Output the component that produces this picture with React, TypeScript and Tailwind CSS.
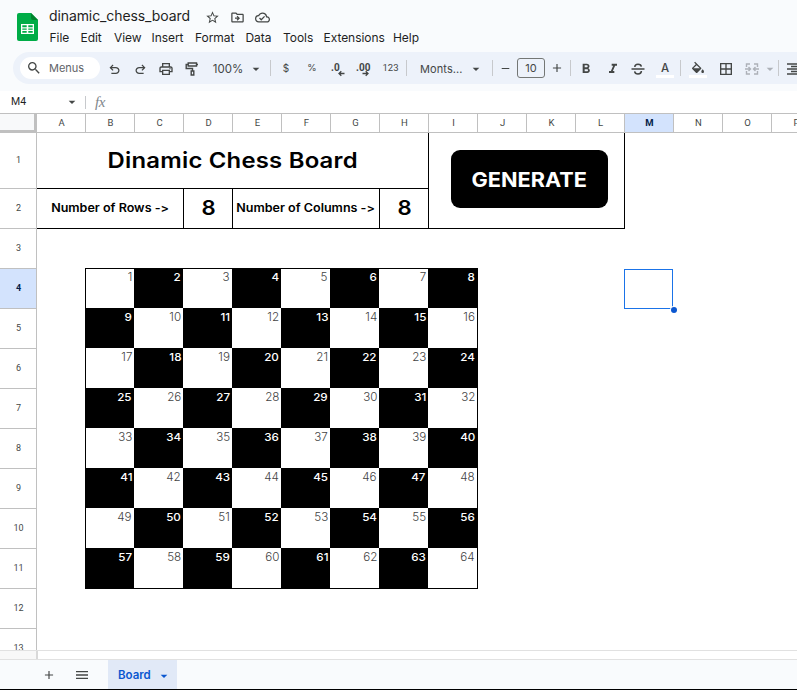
import React from "react";
import {
  MdStarBorder, MdOutlineDriveFileMove, MdOutlineCloudDone, MdSearch, MdOutlinePrint,
  MdArrowDropDown, MdFormatBold, MdFormatItalic, MdFormatColorFill,
  MdBorderAll, MdAdd, MdRemove, MdMenu,
} from "react-icons/md";

const columns = "ABCDEFGHIJKLMNOP".split("");
const rows = Array.from({ length: 13 }, (_, i) => i + 1);
const squares = Array.from({ length: 64 }, (_, i) => i + 1);

const menus: [string, string][] = [
  ["File", "w-[31px]"], ["Edit", "w-[33.5px]"], ["View", "w-[37.5px]"], ["Insert", "w-[43.5px]"],
  ["Format", "w-[50.5px]"], ["Data", "w-[37.5px]"], ["Tools", "w-[40.5px]"],
  ["Extensions", "w-[69.5px]"], ["Help", "w-[40px]"],
];

function Slot({ className, children }: { className: string; children?: React.ReactNode }) {
  return <div className={"flex h-full shrink-0 items-center justify-center " + className}>{children}</div>;
}

function Divider() {
  return <div className="h-4 w-px shrink-0 bg-[#c7c9cc]" />;
}

function UndoIcon({ className = "" }: { className?: string }) {
  return (
    <svg viewBox="0 -960 960 960" className={"size-[15px] fill-[#444746] " + className}>
      <path d="M280-200v-80h284q63 0 109.500-40T720-420q0-60-46.500-100T564-560H312l104 104-56 56-200-200 200-200 56 56-104 104h252q97 0 166.500 63T800-420q0 94-69.500 157T564-200H280Z" />
    </svg>
  );
}

function Decimal({ label, right }: { label: string; right?: boolean }) {
  return (
    <svg viewBox="0 0 18 18" className="size-[18px] overflow-visible text-[#444746]">
      <text x={right ? 1 : 2} y="11.500" className="fill-current font-['Roboto',sans-serif] text-[10px] font-bold">{label}</text>
      <path d={right ? "M7.500 14.500H13M10.700 12.300 13 14.500 10.700 16.700" : "M15.500 14.500H10M12.300 12.300 10 14.500 12.300 16.700"} fill="none" stroke="currentColor" strokeWidth="1.300" />
    </svg>
  );
}

function Header() {
  return (
    <header className="flex h-[52px] shrink-0">
      <svg viewBox="0 0 21 28" className="mt-[13px] ml-[17px] h-7 w-[21px] shrink-0">
        <path d="M2 0h12L21 7V26a2 2 0 0 1-2 2H2a2 2 0 0 1-2-2V2a2 2 0 0 1 2-2Z" fill="#00ac47" />
        <path d="M14 0 21 7h-5a2 2 0 0 1-2-2Z" fill="#00832d" />
        <path d="M4 11h13v10H4Z" fill="#fff" />
        <path d="M5.300 12.300h4.400v1.900H5.300Zm6 0h4.400v1.900h-4.400ZM5.300 15.400h4.400v1.400H5.300Zm6 0h4.400v1.400h-4.400ZM5.300 18h4.400v1.700H5.300Zm6 0h4.400v1.700h-4.400Z" fill="#00ac47" />
      </svg>
      <div className="ml-[11px]">
        <div className="flex h-[33px] items-center text-[#444746]">
          <h1 className="w-[155px] pb-0.5 text-[14px] leading-[20px] tracking-[-0.100px] text-[#1f1f1f]">dinamic_chess_board</h1>
          <Slot className="w-[17px] pt-0.5"><MdStarBorder className="size-[15px]" /></Slot>
          <Slot className="ml-2 w-[17px] pt-0.5"><MdOutlineDriveFileMove className="size-[15px]" /></Slot>
          <Slot className="ml-2 w-[17px] pt-0.5"><MdOutlineCloudDone className="size-[15px]" /></Slot>
        </div>
        <nav className="ml-[0.5px] flex text-[12px] leading-[9px] tracking-[-0.050px] text-[#1f1f1f]">
          {menus.map(([m, w]) => <span key={m} className={w}>{m}</span>)}
        </nav>
      </div>
    </header>
  );
}

function Toolbar() {
  return (
    <div className="ml-[13px] flex h-8 shrink-0 items-center overflow-hidden rounded-l-2xl bg-[#edf2fa] text-[#444746]">
      <div className="ml-[7px] flex h-[22px] w-20 shrink-0 items-center rounded-full bg-white">
        <MdSearch className="ml-[6px] size-4" />
        <span className="ml-[7px] text-[11px] leading-[20px] text-[#5f6368]">Menus</span>
      </div>
      <Slot className="w-[27px] pt-0.5 pl-px"><UndoIcon /></Slot>
      <Slot className="w-[25px] pt-0.5 pl-px"><UndoIcon className="-scale-x-100" /></Slot>
      <Slot className="w-[27px] pt-px"><MdOutlinePrint className="size-4" /></Slot>
      <Slot className="w-[24px] pt-px pl-px">
        <svg viewBox="0 0 16 16" className="size-4" fill="none" stroke="#444746" strokeWidth="1.400">
          <path d="M4.200 2h8.300v3H4.200ZM4.200 3.500H2.200v4H8.500V10M12.300 3.500H14" />
          <path d="M7.200 10h2.600v4H7.200Z" />
        </svg>
      </Slot>
      <Slot className="ml-[10px] w-[30px] pt-[3px] text-[11.500px]">100%</Slot>
      <Slot className="ml-[5px] w-4 pt-0.5"><MdArrowDropDown className="size-4" /></Slot>
      <Slot className="w-[7px] justify-end"><Divider /></Slot>
      <Slot className="w-[30px] pt-px text-[10px]">$</Slot>
      <Slot className="w-[22px] pt-px text-[9.500px]">%</Slot>
      <Slot className="w-[29px]"><Decimal label=".0" /></Slot>
      <Slot className="w-[23px]"><Decimal label=".00" right /></Slot>
      <Slot className="w-[31px] pt-px font-['Roboto',sans-serif] text-[9.500px]">123</Slot>
      <Divider />
      <Slot className="ml-[13px] w-[42px] pt-[3px] text-[11px] tracking-[0.100px] !justify-start">Monts...</Slot>
      <Slot className="ml-[6px] w-4 pt-0.5"><MdArrowDropDown className="size-4" /></Slot>
      <Slot className="w-[9px] justify-end"><Divider /></Slot>
      <Slot className="w-[24px]"><MdRemove className="size-[13px]" /></Slot>
      <div className="flex h-5 w-7 shrink-0 items-center justify-center rounded-[3px] border border-[#747775] pt-px text-[11px]">10</div>
      <Slot className="w-[25px] pr-px"><MdAdd className="size-[14px]" /></Slot>
      <Divider />
      <Slot className="w-[30px] pt-px"><MdFormatBold className="size-4" /></Slot>
      <Slot className="w-[24px] pt-0.5 pr-px"><MdFormatItalic className="size-4" /></Slot>
      <Slot className="w-[28px] pt-px pr-[2px]">
        <svg viewBox="0 0 14 14" className="size-[14px]" fill="none" stroke="#444746" strokeWidth="1.500">
          <path d="M.5 7h13M3.800 5C3.800 3 5.300 2.200 7 2.200S10.200 3 10.300 4.600M3.600 9.300C3.900 11 5.200 11.900 7 11.900s3.400-.9 3.400-2.900" />
        </svg>
      </Slot>
      <Slot className="w-[24px] flex-col pt-0.5">
        <span className="h-[14px] text-[11.500px] leading-[15px] font-medium">A</span>
        <span className="h-[3px] w-[18px] bg-white" />
      </Slot>
      <Slot className="w-[4px] justify-end"><Divider /></Slot>
      <Slot className="w-[34px] flex-col pt-0.5">
        <MdFormatColorFill className="h-[14px] w-[16px]" viewBox="0 0 24 19" />
        <span className="h-[3px] w-[18px] bg-white" />
      </Slot>
      <Slot className="w-[21px] pt-px"><MdBorderAll className="size-4" /></Slot>
      <Slot className="w-[32px] pt-px">
        <svg viewBox="0 0 14 14" className="size-[14px]" fill="none" stroke="#adb1b8" strokeWidth="1.400">
          <path d="M5 2H1.500v3M9 2h3.500v3M1.500 9v3H5M12.500 9v3H9M0 7h5M3.500 5 5.500 7l-2 2M14 7H9M10.500 5 8.500 7l2 2" />
        </svg>
      </Slot>
      <Slot className="w-[4px] pt-0.5"><MdArrowDropDown className="size-4 shrink-0 text-[#adb1b8]" /></Slot>
      <Slot className="w-[7px] justify-end"><Divider /></Slot>
      <svg viewBox="0 0 14 12" className="mt-px ml-[8px] h-3 w-[14px] shrink-0" stroke="#444746" strokeWidth="1.400">
        <path d="M0 1h14M4 3.500h10M0 6h14M4 8.500h10M0 11h14" />
      </svg>
    </div>
  );
}

export default function App() {
  return (
    <div className="flex h-[690px] w-[797px] flex-col overflow-hidden bg-[#f9fbfd] font-['Inter',sans-serif]">
      <Header />
      <Toolbar />
      <div className="mt-[7px] flex h-[22px] shrink-0 items-center bg-white text-[#444746]">
        <span className="ml-[11px] w-[53px] font-['Roboto',sans-serif] text-[10.500px] text-[#1f1f1f]">M4</span>
        <MdArrowDropDown className="size-4" />
        <div className="ml-[5px] h-[13px] w-px bg-[#c7c9cc]" />
        <span className="ml-[9px] font-['Liberation_Serif',serif] text-[15px] leading-none tracking-[-0.500px] text-[#80868b] italic">fx</span>
      </div>

      <div className="flex h-5 shrink-0 border-y border-[#c0c0c0] bg-white">
        <div className="h-[19px] w-[37px] shrink-0 border-r-[3px] border-b-[3px] border-[#c0c0c0] bg-[#f8f9fa]" />
        {columns.map((c) => (
          <div
            key={c}
            className={"flex h-[18px] w-[49px] shrink-0 items-center justify-center border-r border-[#c0c0c0] pl-px font-['Roboto',sans-serif] text-[9.500px] " + (c === "M" ? "bg-[#d3e3fd] font-bold text-[#041e49]" : "text-[#444746]")}
          >
            {c}
          </div>
        ))}
      </div>

      <div className="flex h-[517px] shrink-0 overflow-hidden bg-white">
        <div className="w-[37px] shrink-0 border-r border-[#c0c0c0]">
          {rows.map((r) => (
            <div
              key={r}
              className={"flex items-center justify-center border-b border-[#c0c0c0] pl-px font-['Roboto',sans-serif] text-[9px] " + (r === 1 ? "h-14 " : "h-10 ") + (r === 4 ? "bg-[#d3e3fd] font-bold text-[#041e49]" : "text-[#444746]")}
            >
              {r}
            </div>
          ))}
        </div>

        <div className="w-[760px]">
          <div className="flex h-24 w-[588px] border-r border-b border-black">
            <div className="w-[392px] border-r border-black text-black">
              <div className="flex h-14 items-center justify-center border-b border-black text-[21.500px] font-semibold tracking-[0.200px]">
                <span className="scale-x-[1.110]">Dinamic Chess Board</span>
              </div>
              <div className="flex h-[39px] text-[11.500px] font-semibold [font-feature-settings:'calt'_0]">
                <div className="flex w-[147px] items-center justify-center border-r border-black">
                  <span className="scale-x-[1.090]">Number of Rows -&gt;</span>
                </div>
                <div className="flex w-[49px] items-center justify-center border-r border-black pl-px text-[20.500px]"><span className="scale-x-[1.080]">8</span></div>
                <div className="flex w-[147px] items-center justify-center border-r border-black whitespace-nowrap">
                  <span className="scale-x-[1.090]">Number of Columns -&gt;</span>
                </div>
                <div className="flex w-[48px] items-center justify-center pl-px text-[20.500px]"><span className="scale-x-[1.080]">8</span></div>
              </div>
            </div>
            <button className="mt-[17px] ml-[22px] flex h-[58px] w-[157px] items-center justify-center rounded-[9px] bg-black pt-px text-[20px] font-bold text-white">
              <span className="scale-x-[1.085]">GENERATE</span>
            </button>
          </div>

          <div className="mt-[39px] ml-[48px] flex items-start">
            <div className="grid h-[321px] w-[393px] grid-cols-[48px_repeat(7,49px)] grid-rows-[39px_repeat(7,40px)] border border-black">
              {squares.map((n) => {
                const dark = (Math.floor((n - 1) / 8) + n - 1) % 2 === 1;
                return (
                  <div
                    key={n}
                    className={"flex items-end justify-end pr-[2px] text-[11px] leading-[14px] " + (dark ? "bg-black font-medium text-white" : "bg-white font-light text-[#434343]")}
                  >
                    <span className="h-[38px] origin-right scale-x-[1.060]">{n}</span>
                  </div>
                );
              })}
            </div>
            <div className="relative mt-px ml-[146px] h-[40px] w-[49px] border border-[#1a73e8]">
              <span className="absolute -right-[5px] -bottom-[5px] size-[6px] rounded-full bg-[#0b57d0] ring-1 ring-white" />
            </div>
          </div>
        </div>
      </div>

      <div className="flex h-[10px] shrink-0 border-y border-[#e1e1e1] bg-white">
        <div className="w-[38px] border-r-2 border-[#d9d9d9] bg-[#f8f8f8]" />
      </div>
      <footer className="flex h-[30px] shrink-0 items-center border-b border-black pt-px text-[#444746]">
        <MdAdd className="ml-[42px] size-[14px]" />
        <MdMenu className="ml-[18px] size-4" />
        <div className="-mt-px ml-[18px] flex h-[29px] w-[69px] items-center bg-[#e1e9f7] pt-[3px] text-[#0b57d0]">
          <span className="ml-[10px] w-[38px] text-[11.500px] font-semibold">Board</span>
          <MdArrowDropDown className="size-4" />
        </div>
      </footer>
    </div>
  );
}
